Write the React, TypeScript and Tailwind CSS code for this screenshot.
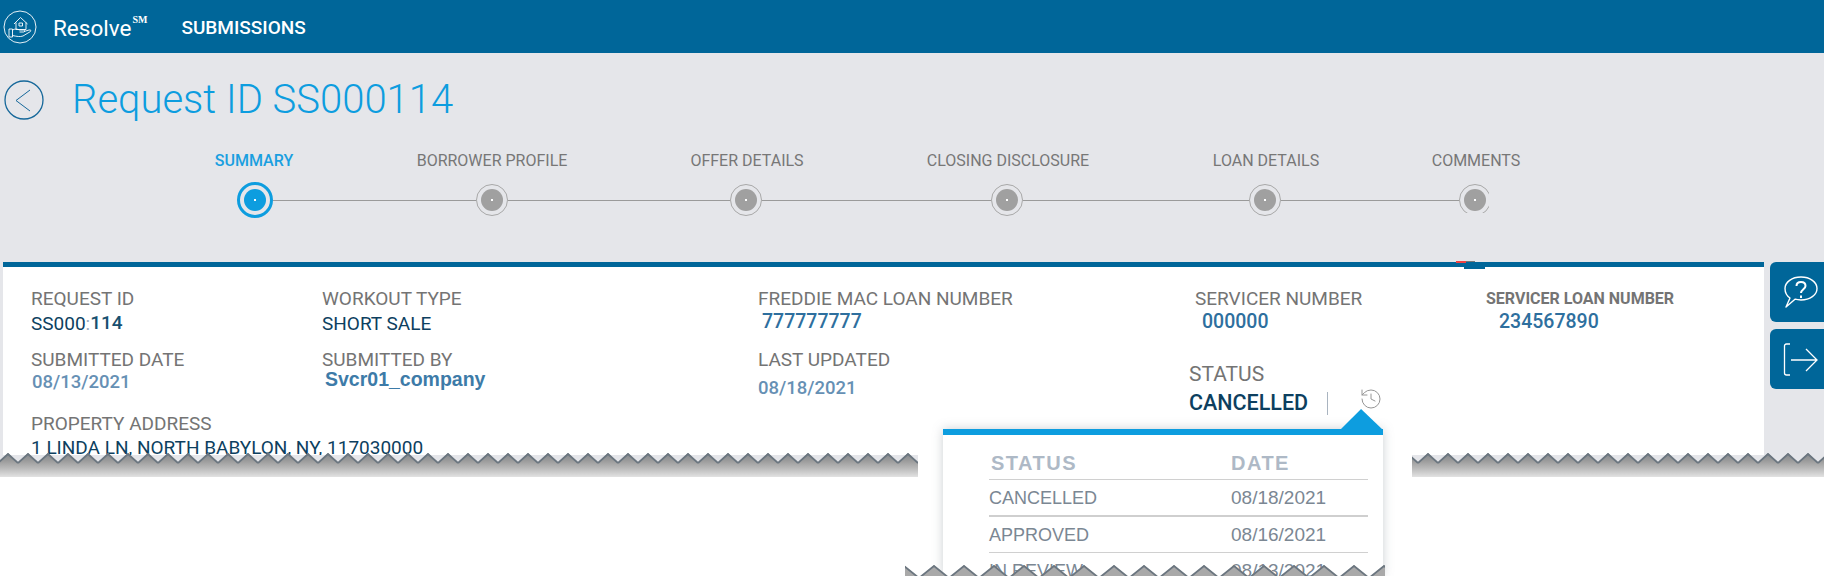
import React from 'react';
import { History } from 'lucide-react';

const roboto = "font-['Roboto',sans-serif]";

const Field: React.FC<{ label: string; className?: string; children: React.ReactNode }> = ({ label, className = '', children }) => (
  <div className={className}>
    <div className="whitespace-nowrap text-[19px] leading-[24px] text-[#747474]">{label}</div>
    {children}
  </div>
);

const Step: React.FC<{ active?: boolean; clipped?: boolean }> = ({ active, clipped }) => {
  if (active) {
    return (
      <div className="flex h-[36px] w-[36px] shrink-0 items-center justify-center rounded-full border-[3px] border-[#0d9ddf]">
        <div className="flex h-[22px] w-[22px] items-center justify-center rounded-full bg-[#0d9ddf]">
          <div className="h-[2px] w-[2px] bg-white" />
        </div>
      </div>
    );
  }
  const ring = (
    <div className="flex h-[32px] w-[32px] shrink-0 items-center justify-center rounded-full border border-[#a8a8a8]">
      <div className="flex h-[22px] w-[22px] items-center justify-center rounded-full bg-[#a0a0a0]">
        <div className="h-[2px] w-[2px] bg-white" />
      </div>
    </div>
  );
  if (clipped) return <div className="mt-[2px] h-[29px] w-[30px] shrink-0 self-start overflow-hidden">{ring}</div>;
  return ring;
};

const Line: React.FC<{ className: string }> = ({ className }) => <div className={`h-px bg-[#9a9a9a] ${className}`} />;

interface TearProps {
  id: string;
  period: number;
  depth: number;
  height: number;
  offset: number;
  stops: string[];
  className: string;
}

// torn paper edge, drawn over whatever sits behind it
const Tear: React.FC<TearProps> = ({ id, period, depth, height, offset, stops, className }) => (
  <svg className={className} height={height} width="100%">
    <defs>
      <linearGradient id={`${id}g`} x1="0" y1="0" x2="0" y2="1">
        {stops.map((c, i) => (
          <stop key={i} offset={i / (stops.length - 1)} stopColor={c} />
        ))}
      </linearGradient>
      <pattern id={`${id}p`} x={offset} width={period} height={height} patternUnits="userSpaceOnUse">
        <polygon points={`0,${depth} ${period / 2},0 ${period},${depth} ${period},${height} 0,${height}`} fill="white" />
      </pattern>
      <pattern id={`${id}s`} x={offset} width={period} height={height} patternUnits="userSpaceOnUse">
        <polyline points={`0,${depth} ${period / 2},1 ${period},${depth}`} fill="none" stroke="#6b7680" strokeWidth="1.800" />
      </pattern>
      <mask id={`${id}m`}>
        <rect width="100%" height="100%" fill={`url(#${id}p)`} />
      </mask>
    </defs>
    <rect width="100%" height="100%" fill={`url(#${id}g)`} mask={`url(#${id}m)`} />
    <rect width="100%" height="100%" fill={`url(#${id}s)`} />
  </svg>
);

export default function App() {
  return (
    <div className={`relative h-[576px] w-[1824px] overflow-hidden bg-white ${roboto}`}>
      <header className="flex h-[53px] items-center bg-[#006699] pl-[3px] text-white">
        <svg width="34" height="34" viewBox="0 0 34 34" fill="none" stroke="white" strokeWidth="0.9">
          <circle cx="17" cy="17" r="16" />
          <path d="M11 14L17.500 7.500 24.500 14M13 12.500v7h10v-7M16 13h3.500v3H16z" />
          <path d="M6 19h3.500v8H6zM9.500 20c3-1.500 5-1 7 0h4c1.500 0 1.500 2 0 2h-4M21 21.500l5-1.500c2-.5 2.500 1 1 1.800l-7 4.200c-3 1-6 .5-10.500-.5" />
        </svg>
        <span className="ml-[16px] mt-[3px] text-[22.500px] leading-none">Resolve</span>
        <span className="mb-[14px] ml-px font-['Liberation_Serif',serif] text-[10px] font-bold leading-none">SM</span>
        <span className="ml-[34px] mt-[3px] text-[19px] font-medium">SUBMISSIONS</span>
      </header>

      <main className="h-[412px] bg-[#e5e6ea] pl-[3px]">
        <div className="flex h-[88px] items-center pl-px pt-[6px]">
          <svg width="40" height="40" viewBox="0 0 40 40" fill="none" stroke="#16689a" strokeWidth="1.300">
            <circle cx="20" cy="20" r="19" />
            <path d="M26 10 L12 20.500 L26 31" strokeWidth="1" />
          </svg>
          <h1 className="ml-[28px] text-[40px] font-light leading-none text-[#0d9ddf]">Request ID SS000114</h1>
        </div>

        <div className="mt-[6px] flex h-[28px] items-center pl-[161px] text-[16px] text-[#777777]">
          <div className="w-[180px] text-center font-medium text-[#1a9fe0]">SUMMARY</div>
          <div className="ml-[58px] w-[180px] text-center">BORROWER PROFILE</div>
          <div className="ml-[75px] w-[180px] text-center">OFFER DETAILS</div>
          <div className="ml-[81px] w-[180px] text-center">CLOSING DISCLOSURE</div>
          <div className="ml-[78px] w-[180px] text-center">LOAN DETAILS</div>
          <div className="ml-[30px] w-[180px] text-center">COMMENTS</div>
        </div>

        <div className="mt-[7px] flex h-[36px] items-center pl-[234px]">
          <Step active />
          <Line className="w-[203px]" />
          <Step />
          <Line className="w-[222px]" />
          <Step />
          <Line className="w-[229px]" />
          <Step />
          <Line className="w-[226px]" />
          <Step />
          <Line className="w-[178px]" />
          <Step clipped />
        </div>

        <div className="mt-[44px] flex">
          <section className="relative h-[193px] w-[1761px] shrink-0 overflow-hidden border-t-[5px] border-[#006699] bg-white">
            <div className="absolute left-[1461px] top-0 h-[2px] w-[21px] bg-[#006699]" />
            <div className="flex pl-[28px] pt-[20px]">
              <div className="w-[291px]">
                <Field label="REQUEST ID">
                  <div className="pt-px text-[19px] leading-[24px] text-[#0d3f5f]">
                    SS000<span className="text-[#9ab]">:</span>
                    <span className="relative -top-px font-medium text-[#17506f]">114</span>
                  </div>
                </Field>
                <Field label="SUBMITTED DATE" className="mt-[12px]">
                  <div className="pl-px text-[18.500px] font-medium leading-[20px] text-[#6690b4]">08/13/2021</div>
                </Field>
                <Field label="PROPERTY ADDRESS" className="mt-[20px]">
                  <div className="whitespace-nowrap text-[19px] leading-[24px] text-[#0d3f5f]">1 LINDA LN, NORTH BABYLON, NY, 117030000</div>
                </Field>
              </div>
              <div className="w-[436px]">
                <Field label="WORKOUT TYPE">
                  <div className="pt-px text-[19px] leading-[24px] text-[#0d3f5f]">SHORT SALE</div>
                </Field>
                <Field label="SUBMITTED BY" className="mt-[12px]">
                  <div className="-mt-[3px] pl-[3px] font-['Liberation_Sans',sans-serif] text-[19.500px] font-bold leading-[20px] text-[#3d7ba8]">Svcr01_company</div>
                </Field>
              </div>
              <div className="w-[437px]">
                <Field label="FREDDIE MAC LOAN NUMBER">
                  <div className="pl-[4px] text-[19.500px] font-medium leading-[22px] text-[#2e6f9e]">777777777</div>
                </Field>
                <Field label="LAST UPDATED" className="mt-[15px]">
                  <div className="mt-[5px] text-[18.500px] font-medium leading-[22px] text-[#6690b4]">08/18/2021</div>
                </Field>
              </div>
              <div className="w-[291px]">
                <Field label="SERVICER NUMBER">
                  <div className="pl-[7px] text-[19.500px] font-medium leading-[22px] text-[#2e6f9e]">000000</div>
                </Field>
                <div className="-ml-[6px] mt-[29px] text-[21px] leading-[24px] text-[#747474]">STATUS</div>
                <div className="-ml-[6px] mt-[5px] flex items-center">
                  <span className="w-[138px] text-[21.500px] font-medium leading-[24px] text-[#0d3f5f]">CANCELLED</span>
                  <span className="h-[23px] w-px bg-[#a9b4c0]" />
                  <History className="ml-[31px] -mt-[8px] h-[24px] w-[24px] text-[#969696]" strokeWidth={1} />
                </div>
              </div>
              <div>
                <div className="whitespace-nowrap text-[16px] font-bold leading-[24px] text-[#747474]">SERVICER LOAN NUMBER</div>
                <div className="pl-[13px] text-[19.500px] font-medium leading-[22px] text-[#2e6f9e]">234567890</div>
              </div>
            </div>
          </section>
          <div className="ml-[6px] flex grow flex-col gap-[7px]">
            <button className="flex h-[60px] items-center rounded-l-[6px] bg-[#006699] pl-[14px]">
              <svg width="34" height="33" viewBox="0 0 34 33" fill="none" stroke="white" strokeWidth="1.400">
                <path d="M2 31l4-9C3 20 1 16.500 1 12.500 1 6 8 1 17 1s16 5 16 11.500S26 24 17 24c-2 0-4-.2-6-.8z" strokeLinejoin="round" />
                <path d="M12.500 10c0-2.500 2-4 4.500-4s4.500 1.500 4.500 4c0 3-4.500 3.500-4.500 7M17 19.500v2.500" strokeWidth="2" />
              </svg>
            </button>
            <button className="flex h-[60px] items-center rounded-l-[6px] bg-[#006699] pl-[13px]">
              <svg width="36" height="33" viewBox="0 0 36 33" fill="none" stroke="white" strokeWidth="1.300">
                <path d="M7 1H3.500C2 1 1.500 2 1.500 3v27c0 1 .5 2 2 2H7M8 17h26M23 6l11 11-11 11" />
              </svg>
            </button>
          </div>
        </div>
      </main>

      {/* leftover marks on the bar */}
      <div className="absolute left-[1456px] top-[261px] h-[2px] w-[10px] bg-[#ef4444]" />
      <div className="absolute left-[1466px] top-[261px] h-px w-[9px] bg-[#777777]" />

      <Tear id="main" period={20} depth={10} height={24} offset={-2} stops={['#7f858a', '#9c9c9c', '#bdbdbd', '#e2e2e2']} className="absolute left-0 top-[453px]" />

      <div className="absolute left-[918px] top-[436px] h-[140px] w-[494px] bg-white" />

      {/* status history popover */}
      <div className="absolute left-[943px] top-[429px] h-[147px] w-[440px] border-t-[6px] border-[#0d9ddf] bg-white shadow-[0_0_10px_rgba(110,120,130,0.35)]">
        <div className="absolute -top-[26px] right-0 h-[21px] w-[43px] bg-[#0d9ddf] [clip-path:polygon(0_100%,49%_0,100%_100%)]" />
        <div className="pl-[46px] pr-[15px] pt-[17px] font-['Liberation_Sans',sans-serif] text-[18px] text-[#7b8793]">
          <div className="grid h-[28px] grid-cols-[243px_1fr] border-b border-[#d0d0d0] pl-[2px] text-[20px] font-bold leading-[22px] tracking-[1.500px] text-[#aeb9c6]">
            <span>STATUS</span>
            <span className="-ml-[3px]">DATE</span>
          </div>
          <div className="grid h-[37px] grid-cols-[243px_1fr] items-center border-b-2 border-[#cfcfcf] pt-px">
            <span>CANCELLED</span>
            <span className="-ml-px text-[19px]">08/18/2021</span>
          </div>
          <div className="grid h-[36px] grid-cols-[243px_1fr] items-center border-b border-[#d0d0d0] pt-px">
            <span>APPROVED</span>
            <span className="-ml-px text-[19px]">08/16/2021</span>
          </div>
          <div className="grid h-[36px] grid-cols-[243px_1fr] items-center">
            <span>IN REVIEW</span>
            <span className="-ml-px text-[19px]">08/13/2021</span>
          </div>
        </div>
      </div>

      <Tear id="pop" period={30} depth={13} height={11} offset={14} stops={['#a9a9a9', '#a9a9a9']} className="absolute left-[905px] top-[565px] !w-[480px]" />
    </div>
  );
}
